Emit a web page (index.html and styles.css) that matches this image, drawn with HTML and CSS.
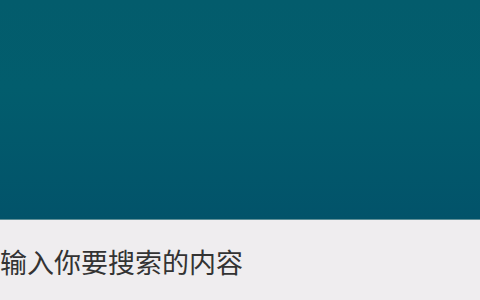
FILE: index.html
```html
<!DOCTYPE html>
<html lang="zh">
<head>
<meta charset="utf-8">
<link rel="stylesheet" href="styles.css">
</head>
<body>
<div class="page">
  <div class="hero"></div>
  <div class="search">
    <span class="placeholder">输入你要搜索的内容</span>
  </div>
</div>
</body>
</html>
```
FILE: styles.css
```css
html, body {
  margin: 0;
  padding: 0;
  width: 480px;
  height: 300px;
  overflow: hidden;
  background: #efedee;
}
.page {
  display: flex;
  flex-direction: column;
  height: 300px;
}
.hero {
  height: 220px;
  flex: none;
  background: linear-gradient(180deg, #035c6c 0%, #025d6d 40%, #02536a 100%);
  border-bottom: 1px solid #5f8f97;
  box-sizing: border-box;
}
.search {
  flex: 1;
  background: #efedef;
  display: flex;
  align-items: flex-start;
  padding-top: 27px;
}
.placeholder {
  margin-left: 0;
  font-family: "Noto Sans CJK SC", "Microsoft YaHei", sans-serif;
  font-size: 27px;
  line-height: 30px;
  color: #333333;
  letter-spacing: 0;
  white-space: nowrap;
}
```
